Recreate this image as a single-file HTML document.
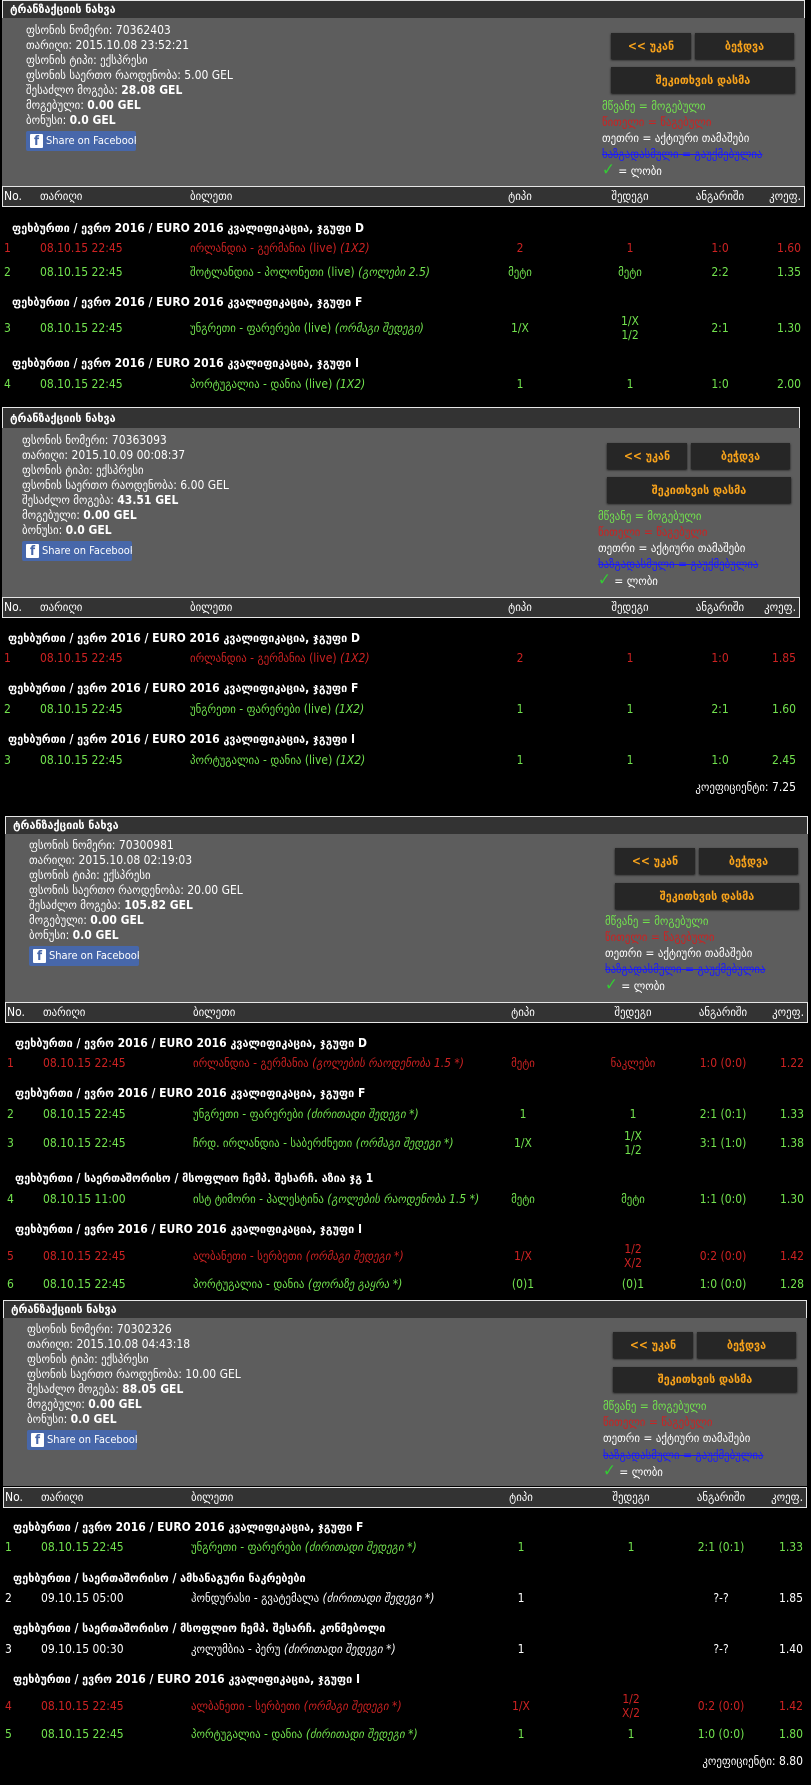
<!DOCTYPE html>
<html><head><meta charset="utf-8">
<style>
*{margin:0;padding:0;box-sizing:border-box}
body{width:811px;height:1785px;background:#000;position:relative;overflow:hidden;font-family:"Liberation Sans Narrow","DejaVu Sans Condensed","Liberation Sans",sans-serif;font-size:12px;color:#fff}
.s{position:absolute;background:#000}
.hd{position:absolute;left:0;right:0;top:0;height:19px;background:#333;border:1px solid #e6e6e6;font-weight:bold;font-size:12px;line-height:17px;padding-left:7px}
.inf{position:absolute;left:0;right:0;top:18px;height:168px;background:#5d5d5d}
.th{position:absolute;left:0;right:0;top:186px;height:21px;background:#333;border:1px solid #e6e6e6}
.t{position:absolute;white-space:nowrap;line-height:16px;height:16px}
.r{position:absolute;left:0;right:0;height:16px;line-height:16px;white-space:nowrap}
.r span{position:absolute;top:0}
.c1{left:2px}.c2{left:38px}.c3{left:188px}
.c4{left:478px;width:80px;text-align:center}
.c5{left:588px;width:80px;text-align:center}
.c6{left:678px;width:80px;text-align:center}
.c7{right:4px}
.g{color:#72e24e}.rd{color:#cc2222}.w{color:#fff}
.grp{font-weight:bold;color:#fff;left:10px}
.btn{position:absolute;background:#262626;color:#f7a21b;text-align:center;font-weight:bold;font-size:12px;box-shadow:0 1px 2px #111}
.fb{position:absolute;left:24px;width:110px;height:20px;background:#4767aa;border-radius:2px;color:#fff;font-size:11px;line-height:20px;padding-left:20px;white-space:nowrap;overflow:hidden}
.fb:before{content:"f";position:absolute;left:4px;top:3px;width:13px;height:14px;background:#fff;color:#4767aa;font-weight:bold;font-size:13px;line-height:16px;text-align:center;border-radius:1px}
.leg{position:absolute;white-space:nowrap;line-height:16px}
.chk{color:#3c3;font-size:17px;font-weight:bold}
i{font-style:italic}
</style></head><body>

<!-- SECTION 1 -->
<div class="s" style="left:2px;top:0;width:803px;height:406px">
 <div class="hd">ტრანზაქციის ნახვა</div>
 <div class="inf"></div>
 <div class="t" style="left:24px;top:22px">ფსონის ნომერი: 70362403</div>
 <div class="t" style="left:24px;top:37px">თარიღი: 2015.10.08 23:52:21</div>
 <div class="t" style="left:24px;top:52px">ფსონის ტიპი: ექსპრესი</div>
 <div class="t" style="left:24px;top:67px">ფსონის საერთო რაოდენობა: 5.00 GEL</div>
 <div class="t" style="left:24px;top:82px">შესაძლო მოგება: <b>28.08 GEL</b></div>
 <div class="t" style="left:24px;top:97px">მოგებული: <b>0.00 GEL</b></div>
 <div class="t" style="left:24px;top:112px">ბონუსი: <b>0.0 GEL</b></div>
 <div class="fb" style="top:131px">Share on Facebook!</div>
 <div class="btn" style="left:609px;top:33px;width:80px;height:26px;line-height:26px">&lt;&lt; უკან</div>
 <div class="btn" style="left:693px;top:33px;width:99px;height:26px;line-height:26px">ბეჭდვა</div>
 <div class="btn" style="left:609px;top:67px;width:184px;height:26px;line-height:26px">შეკითხვის დასმა</div>
 <div class="leg g" style="left:600px;top:98px">მწვანე = მოგებული</div>
 <div class="leg rd" style="left:600px;top:114px">წითელი = წაგებული</div>
 <div class="leg" style="left:600px;top:130px">თეთრი = აქტიური თამაშები</div>
 <div class="leg" style="left:600px;top:146px;color:#1a1aff;text-decoration:line-through">ხაზგადასმული = გაუქმებულია</div>
 <div class="leg" style="left:600px;top:162px"><span class="chk">✓</span> = ლობი</div>
 <div class="th"></div>
 <div class="r" style="top:188px"><span class="c1">No.</span><span class="c2">თარიღი</span><span class="c3">ბილეთი</span><span class="c4">ტიპი</span><span class="c5">შედეგი</span><span class="c6">ანგარიში</span><span class="c7">კოეფ.</span></div>
 <div class="r" style="top:220px"><span class="grp">ფეხბურთი / ევრო 2016 / EURO 2016 კვალიფიკაცია, ჯგუფი D</span></div>
 <div class="r rd" style="top:240px"><span class="c1">1</span><span class="c2">08.10.15 22:45</span><span class="c3">ირლანდია - გერმანია (live) <i>(1X2)</i></span><span class="c4">2</span><span class="c5">1</span><span class="c6">1:0</span><span class="c7">1.60</span></div>
 <div class="r g" style="top:264px"><span class="c1">2</span><span class="c2">08.10.15 22:45</span><span class="c3">შოტლანდია - პოლონეთი (live) <i>(გოლები 2.5)</i></span><span class="c4">მეტი</span><span class="c5">მეტი</span><span class="c6">2:2</span><span class="c7">1.35</span></div>
 <div class="r" style="top:294px"><span class="grp">ფეხბურთი / ევრო 2016 / EURO 2016 კვალიფიკაცია, ჯგუფი F</span></div>
 <div class="r g" style="top:320px"><span class="c1">3</span><span class="c2">08.10.15 22:45</span><span class="c3">უნგრეთი - ფარერები (live) <i>(ორმაგი შედეგი)</i></span><span class="c4">1/X</span><span class="c5" style="top:-7px">1/X</span><span class="c5" style="top:7px">1/2</span><span class="c6">2:1</span><span class="c7">1.30</span></div>
 <div class="r" style="top:355px"><span class="grp">ფეხბურთი / ევრო 2016 / EURO 2016 კვალიფიკაცია, ჯგუფი I</span></div>
 <div class="r g" style="top:376px"><span class="c1">4</span><span class="c2">08.10.15 22:45</span><span class="c3">პორტუგალია - დანია (live) <i>(1X2)</i></span><span class="c4">1</span><span class="c5">1</span><span class="c6">1:0</span><span class="c7">2.00</span></div>
</div>

<!-- SECTION 2 -->
<div class="s" style="left:2px;top:407px;width:798px;height:408px">
 <div class="hd" style="height:22px;line-height:20px">ტრანზაქციის ნახვა</div>
 <div class="inf" style="top:21px;height:169px"></div>
 <div class="t" style="left:20px;top:25px">ფსონის ნომერი: 70363093</div>
 <div class="t" style="left:20px;top:40px">თარიღი: 2015.10.09 00:08:37</div>
 <div class="t" style="left:20px;top:55px">ფსონის ტიპი: ექსპრესი</div>
 <div class="t" style="left:20px;top:70px">ფსონის საერთო რაოდენობა: 6.00 GEL</div>
 <div class="t" style="left:20px;top:85px">შესაძლო მოგება: <b>43.51 GEL</b></div>
 <div class="t" style="left:20px;top:100px">მოგებული: <b>0.00 GEL</b></div>
 <div class="t" style="left:20px;top:115px">ბონუსი: <b>0.0 GEL</b></div>
 <div class="fb" style="left:20px;top:134px">Share on Facebook!</div>
 <div class="btn" style="left:605px;top:36px;width:80px;height:26px;line-height:26px">&lt;&lt; უკან</div>
 <div class="btn" style="left:689px;top:36px;width:99px;height:26px;line-height:26px">ბეჭდვა</div>
 <div class="btn" style="left:605px;top:70px;width:184px;height:26px;line-height:26px">შეკითხვის დასმა</div>
 <div class="leg g" style="left:596px;top:101px">მწვანე = მოგებული</div>
 <div class="leg rd" style="left:596px;top:117px">წითელი = წაგებული</div>
 <div class="leg" style="left:596px;top:133px">თეთრი = აქტიური თამაშები</div>
 <div class="leg" style="left:596px;top:149px;color:#1a1aff;text-decoration:line-through">ხაზგადასმული = გაუქმებულია</div>
 <div class="leg" style="left:596px;top:165px"><span class="chk">✓</span> = ლობი</div>
 <div class="th" style="top:190px"></div>
 <div class="r" style="top:192px"><span class="c1">No.</span><span class="c2">თარიღი</span><span class="c3">ბილეთი</span><span class="c4">ტიპი</span><span class="c5">შედეგი</span><span class="c6">ანგარიში</span><span class="c7">კოეფ.</span></div>
 <div class="r" style="top:223px"><span class="grp" style="left:6px">ფეხბურთი / ევრო 2016 / EURO 2016 კვალიფიკაცია, ჯგუფი D</span></div>
 <div class="r rd" style="top:243px"><span class="c1">1</span><span class="c2">08.10.15 22:45</span><span class="c3">ირლანდია - გერმანია (live) <i>(1X2)</i></span><span class="c4">2</span><span class="c5">1</span><span class="c6">1:0</span><span class="c7">1.85</span></div>
 <div class="r" style="top:273px"><span class="grp" style="left:6px">ფეხბურთი / ევრო 2016 / EURO 2016 კვალიფიკაცია, ჯგუფი F</span></div>
 <div class="r g" style="top:294px"><span class="c1">2</span><span class="c2">08.10.15 22:45</span><span class="c3">უნგრეთი - ფარერები (live) <i>(1X2)</i></span><span class="c4">1</span><span class="c5">1</span><span class="c6">2:1</span><span class="c7">1.60</span></div>
 <div class="r" style="top:324px"><span class="grp" style="left:6px">ფეხბურთი / ევრო 2016 / EURO 2016 კვალიფიკაცია, ჯგუფი I</span></div>
 <div class="r g" style="top:345px"><span class="c1">3</span><span class="c2">08.10.15 22:45</span><span class="c3">პორტუგალია - დანია (live) <i>(1X2)</i></span><span class="c4">1</span><span class="c5">1</span><span class="c6">1:0</span><span class="c7">2.45</span></div>
 <div class="r" style="top:372px"><span class="c7">კოეფიციენტი: 7.25</span></div>
</div>

<!-- SECTION 3 -->
<div class="s" style="left:5px;top:816px;width:803px;height:486px">
 <div class="hd">ტრანზაქციის ნახვა</div>
 <div class="inf"></div>
 <div class="t" style="left:24px;top:21px">ფსონის ნომერი: 70300981</div>
 <div class="t" style="left:24px;top:36px">თარიღი: 2015.10.08 02:19:03</div>
 <div class="t" style="left:24px;top:51px">ფსონის ტიპი: ექსპრესი</div>
 <div class="t" style="left:24px;top:66px">ფსონის საერთო რაოდენობა: 20.00 GEL</div>
 <div class="t" style="left:24px;top:81px">შესაძლო მოგება: <b>105.82 GEL</b></div>
 <div class="t" style="left:24px;top:96px">მოგებული: <b>0.00 GEL</b></div>
 <div class="t" style="left:24px;top:111px">ბონუსი: <b>0.0 GEL</b></div>
 <div class="fb" style="top:130px">Share on Facebook!</div>
 <div class="btn" style="left:610px;top:32px;width:80px;height:26px;line-height:26px">&lt;&lt; უკან</div>
 <div class="btn" style="left:694px;top:32px;width:99px;height:26px;line-height:26px">ბეჭდვა</div>
 <div class="btn" style="left:610px;top:67px;width:184px;height:26px;line-height:26px">შეკითხვის დასმა</div>
 <div class="leg g" style="left:600px;top:97px">მწვანე = მოგებული</div>
 <div class="leg rd" style="left:600px;top:113px">წითელი = წაგებული</div>
 <div class="leg" style="left:600px;top:129px">თეთრი = აქტიური თამაშები</div>
 <div class="leg" style="left:600px;top:145px;color:#1a1aff;text-decoration:line-through">ხაზგადასმული = გაუქმებულია</div>
 <div class="leg" style="left:600px;top:161px"><span class="chk">✓</span> = ლობი</div>
 <div class="th"></div>
 <div class="r" style="top:188px"><span class="c1">No.</span><span class="c2">თარიღი</span><span class="c3">ბილეთი</span><span class="c4">ტიპი</span><span class="c5">შედეგი</span><span class="c6">ანგარიში</span><span class="c7">კოეფ.</span></div>
 <div class="r" style="top:219px"><span class="grp">ფეხბურთი / ევრო 2016 / EURO 2016 კვალიფიკაცია, ჯგუფი D</span></div>
 <div class="r rd" style="top:239px"><span class="c1">1</span><span class="c2">08.10.15 22:45</span><span class="c3">ირლანდია - გერმანია <i>(გოლების რაოდენობა 1.5 *)</i></span><span class="c4">მეტი</span><span class="c5">ნაკლები</span><span class="c6">1:0 (0:0)</span><span class="c7">1.22</span></div>
 <div class="r" style="top:269px"><span class="grp">ფეხბურთი / ევრო 2016 / EURO 2016 კვალიფიკაცია, ჯგუფი F</span></div>
 <div class="r g" style="top:290px"><span class="c1">2</span><span class="c2">08.10.15 22:45</span><span class="c3">უნგრეთი - ფარერები <i>(ძირითადი შედეგი *)</i></span><span class="c4">1</span><span class="c5">1</span><span class="c6">2:1 (0:1)</span><span class="c7">1.33</span></div>
 <div class="r g" style="top:319px"><span class="c1">3</span><span class="c2">08.10.15 22:45</span><span class="c3">ჩრდ. ირლანდია - საბერძნეთი <i>(ორმაგი შედეგი *)</i></span><span class="c4">1/X</span><span class="c5" style="top:-7px">1/X</span><span class="c5" style="top:7px">1/2</span><span class="c6">3:1 (1:0)</span><span class="c7">1.38</span></div>
 <div class="r" style="top:354px"><span class="grp">ფეხბურთი / საერთაშორისო / მსოფლიო ჩემპ. შესარჩ. აზია ჯგ 1</span></div>
 <div class="r g" style="top:375px"><span class="c1">4</span><span class="c2">08.10.15 11:00</span><span class="c3">ისტ ტიმორი - პალესტინა <i>(გოლების რაოდენობა 1.5 *)</i></span><span class="c4">მეტი</span><span class="c5">მეტი</span><span class="c6">1:1 (0:0)</span><span class="c7">1.30</span></div>
 <div class="r" style="top:405px"><span class="grp">ფეხბურთი / ევრო 2016 / EURO 2016 კვალიფიკაცია, ჯგუფი I</span></div>
 <div class="r rd" style="top:432px"><span class="c1">5</span><span class="c2">08.10.15 22:45</span><span class="c3">ალბანეთი - სერბეთი <i>(ორმაგი შედეგი *)</i></span><span class="c4">1/X</span><span class="c5" style="top:-7px">1/2</span><span class="c5" style="top:7px">X/2</span><span class="c6">0:2 (0:0)</span><span class="c7">1.42</span></div>
 <div class="r g" style="top:460px"><span class="c1">6</span><span class="c2">08.10.15 22:45</span><span class="c3">პორტუგალია - დანია <i>(ფორაზე გაყრა *)</i></span><span class="c4">(0)1</span><span class="c5">(0)1</span><span class="c6">1:0 (0:0)</span><span class="c7">1.28</span></div>
</div>

<!-- SECTION 4 -->
<div class="s" style="left:3px;top:1300px;width:804px;height:482px">
 <div class="hd">ტრანზაქციის ნახვა</div>
 <div class="inf"></div>
 <div class="t" style="left:24px;top:21px">ფსონის ნომერი: 70302326</div>
 <div class="t" style="left:24px;top:36px">თარიღი: 2015.10.08 04:43:18</div>
 <div class="t" style="left:24px;top:51px">ფსონის ტიპი: ექსპრესი</div>
 <div class="t" style="left:24px;top:66px">ფსონის საერთო რაოდენობა: 10.00 GEL</div>
 <div class="t" style="left:24px;top:81px">შესაძლო მოგება: <b>88.05 GEL</b></div>
 <div class="t" style="left:24px;top:96px">მოგებული: <b>0.00 GEL</b></div>
 <div class="t" style="left:24px;top:111px">ბონუსი: <b>0.0 GEL</b></div>
 <div class="fb" style="top:130px">Share on Facebook!</div>
 <div class="btn" style="left:610px;top:32px;width:80px;height:26px;line-height:26px">&lt;&lt; უკან</div>
 <div class="btn" style="left:694px;top:32px;width:99px;height:26px;line-height:26px">ბეჭდვა</div>
 <div class="btn" style="left:610px;top:67px;width:184px;height:25px;line-height:25px">შეკითხვის დასმა</div>
 <div class="leg g" style="left:600px;top:98px">მწვანე = მოგებული</div>
 <div class="leg rd" style="left:600px;top:114px">წითელი = წაგებული</div>
 <div class="leg" style="left:600px;top:130px">თეთრი = აქტიური თამაშები</div>
 <div class="leg" style="left:600px;top:147px;color:#1a1aff;text-decoration:line-through">ხაზგადასმული = გაუქმებულია</div>
 <div class="leg" style="left:600px;top:163px"><span class="chk">✓</span> = ლობი</div>
 <div class="th" style="top:187px"></div>
 <div class="r" style="top:189px"><span class="c1">No.</span><span class="c2">თარიღი</span><span class="c3">ბილეთი</span><span class="c4">ტიპი</span><span class="c5">შედეგი</span><span class="c6">ანგარიში</span><span class="c7">კოეფ.</span></div>
 <div class="r" style="top:219px"><span class="grp">ფეხბურთი / ევრო 2016 / EURO 2016 კვალიფიკაცია, ჯგუფი F</span></div>
 <div class="r g" style="top:239px"><span class="c1">1</span><span class="c2">08.10.15 22:45</span><span class="c3">უნგრეთი - ფარერები <i>(ძირითადი შედეგი *)</i></span><span class="c4">1</span><span class="c5">1</span><span class="c6">2:1 (0:1)</span><span class="c7">1.33</span></div>
 <div class="r" style="top:270px"><span class="grp">ფეხბურთი / საერთაშორისო / ამხანაგური ნაკრებები</span></div>
 <div class="r w" style="top:290px"><span class="c1">2</span><span class="c2">09.10.15 05:00</span><span class="c3">ჰონდურასი - გვატემალა <i>(ძირითადი შედეგი *)</i></span><span class="c4">1</span><span class="c6">?-?</span><span class="c7">1.85</span></div>
 <div class="r" style="top:320px"><span class="grp">ფეხბურთი / საერთაშორისო / მსოფლიო ჩემპ. შესარჩ. კონმებოლი</span></div>
 <div class="r w" style="top:341px"><span class="c1">3</span><span class="c2">09.10.15 00:30</span><span class="c3">კოლუმბია - პერუ <i>(ძირითადი შედეგი *)</i></span><span class="c4">1</span><span class="c6">?-?</span><span class="c7">1.40</span></div>
 <div class="r" style="top:371px"><span class="grp">ფეხბურთი / ევრო 2016 / EURO 2016 კვალიფიკაცია, ჯგუფი I</span></div>
 <div class="r rd" style="top:398px"><span class="c1">4</span><span class="c2">08.10.15 22:45</span><span class="c3">ალბანეთი - სერბეთი <i>(ორმაგი შედეგი *)</i></span><span class="c4">1/X</span><span class="c5" style="top:-7px">1/2</span><span class="c5" style="top:7px">X/2</span><span class="c6">0:2 (0:0)</span><span class="c7">1.42</span></div>
 <div class="r g" style="top:426px"><span class="c1">5</span><span class="c2">08.10.15 22:45</span><span class="c3">პორტუგალია - დანია <i>(ძირითადი შედეგი *)</i></span><span class="c4">1</span><span class="c5">1</span><span class="c6">1:0 (0:0)</span><span class="c7">1.80</span></div>
 <div class="r" style="top:453px"><span class="c7">კოეფიციენტი: 8.80</span></div>
</div>

</body></html>
